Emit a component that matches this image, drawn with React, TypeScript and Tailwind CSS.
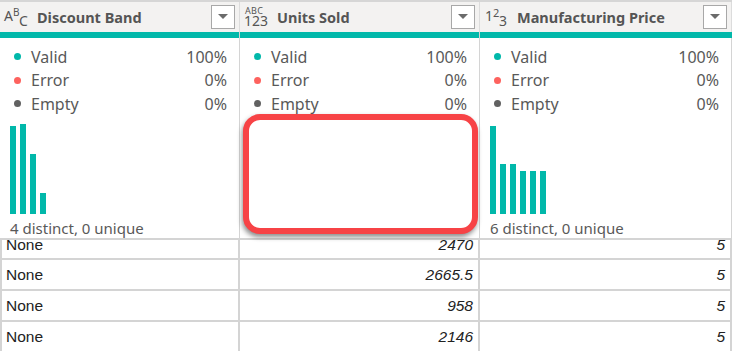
import React from "react";

const teal = "#01b8aa";

function TypeIcon({ kind }: { kind: "abc" | "any" | "num" }) {
  if (kind === "abc") {
    return (
      <div className="relative w-[32px] h-[22px] text-[#555] font-['Noto_Sans',sans-serif]">
        <span className="absolute left-[4px] top-[3px] text-[14px] leading-none">A</span>
        <span className="absolute left-[13px] top-[1px] text-[10px] leading-none">B</span>
        <span className="absolute left-[19px] top-[8px] text-[14px] leading-none">C</span>
      </div>
    );
  }
  if (kind === "any") {
    return (
      <div className="relative w-[32px] h-[22px] text-[#555] font-['Noto_Sans',sans-serif]">
        <span className="absolute left-[5px] top-[0px] text-[9px] leading-none tracking-[0.3px]">ABC</span>
        <span className="absolute left-[4px] top-[8px] text-[14px] leading-none">123</span>
      </div>
    );
  }
  return (
    <div className="relative w-[32px] h-[22px] text-[#555] font-['Noto_Sans',sans-serif]">
      <span className="absolute left-[5px] top-[3px] text-[14px] leading-none">1</span>
      <span className="absolute left-[13px] top-[1px] text-[11px] leading-none">2</span>
      <span className="absolute left-[19px] top-[8px] text-[14px] leading-none">3</span>
    </div>
  );
}

function Header({ title, kind }: { title: string; kind: "abc" | "any" | "num" }) {
  return (
    <div className="h-[30px] flex items-center bg-[#f3f2f1] border-r border-[#dcdcdc]">
      <TypeIcon kind={kind} />
      <div className="ml-[5px] flex-1 text-[14.5px] font-bold text-[#555] font-['Noto_Sans',sans-serif] leading-none">
        {title}
      </div>
      <div className="mr-[4px] w-[24px] h-[24px] bg-white border border-[#a8a8a8] flex items-center justify-center">
        <svg width="10" height="6" viewBox="0 0 10 6">
          <path d="M0 0 L10 0 L5 5 Z" fill="#6b6b6b" />
        </svg>
      </div>
    </div>
  );
}

function Stats() {
  const rows = [
    { c: teal, l: "Valid", v: "100%" },
    { c: "#fd625e", l: "Error", v: "0%" },
    { c: "#616161", l: "Empty", v: "0%" },
  ];
  return (
    <div className="pt-[7px] pl-[14px] pr-[12px]">
      {rows.map((r) => (
        <div key={r.l} className="h-[23.5px] flex items-center text-[16px] text-[#595959] font-['Noto_Sans',sans-serif]">
          <span className="w-[7px] h-[7px] rounded-full" style={{ backgroundColor: r.c }} />
          <span className="ml-[10px] flex-1">{r.l}</span>
          <span>{r.v}</span>
        </div>
      ))}
    </div>
  );
}

function Profile({ bars, caption }: { bars?: number[]; caption?: string }) {
  return (
    <div className="h-[200px] flex flex-col border-r border-[#d4d4d4] bg-white">
      <Stats />
      <div className="h-[98px] flex items-end gap-[4px] pl-[10px]">
        {bars?.map((h, i) => (
          <div key={i} className="w-[6px] bg-[#01b8aa]" style={{ height: h }} />
        ))}
      </div>
      <div className="pt-[4px] pl-[10px] leading-[20px] text-[15px] text-[#595959] font-['Noto_Sans',sans-serif]">
        {caption}
      </div>
    </div>
  );
}

function DataRow({ v2, v3, first }: { v2: string; v3: string; first?: boolean }) {
  const cell = "flex items-center h-[29px] text-[15.5px] text-[#222] font-['Liberation_Sans',Arial,sans-serif]";
  return (
    <div className={`grid grid-cols-[240px_240px_252px] border-t-2 border-[#d4d4d4] overflow-hidden ${first ? "h-[20px]" : "h-[31px]"}`}>
      <div className="border-l-2 border-r-2 border-[#d4d4d4] overflow-hidden">
        <div className={`${cell} pl-[4px] ${first ? "-mt-[10px]" : ""}`}>None</div>
      </div>
      <div className="border-r-2 border-[#d4d4d4] overflow-hidden">
        <div className={`${cell} justify-end pr-[5px] italic ${first ? "-mt-[10px]" : ""}`}>{v2}</div>
      </div>
      <div className="border-r-2 border-[#d4d4d4] overflow-hidden">
        <div className={`${cell} justify-end pr-[5px] italic ${first ? "-mt-[10px]" : ""}`}>{v3}</div>
      </div>
    </div>
  );
}

export default function App() {
  return (
    <div className="relative w-[732px] h-[352px] overflow-hidden bg-white">
      <div className="border-t-2 border-[#d6d6d6]">
        <div className="grid grid-cols-[240px_240px_252px]">
          <Header title="Discount Band" kind="abc" />
          <Header title="Units Sold" kind="any" />
          <Header title="Manufacturing Price" kind="num" />
        </div>
        <div className="grid grid-cols-[240px_240px_252px]">
          <div className="h-[6px] bg-[#01b8aa] border-r border-[#d4d4d4]" />
          <div className="h-[6px] bg-[#01b8aa] border-r border-[#d4d4d4]" />
          <div className="h-[6px] bg-[#01b8aa]" />
        </div>
        <div className="grid grid-cols-[240px_240px_252px]">
          <Profile bars={[88, 90, 60, 21]} caption="4 distinct, 0 unique" />
          <Profile />
          <Profile bars={[88, 50, 50, 43, 43, 43]} caption="6 distinct, 0 unique" />
        </div>
        <DataRow first v2="2470" v3="5" />
        <DataRow v2="2665.5" v3="5" />
        <DataRow v2="958" v3="5" />
        <DataRow v2="2146" v3="5" />
      </div>
      <div className="absolute left-[243px] top-[114px] w-[235px] h-[120px] rounded-[17px] border-[6px] border-[#f74346] bg-white shadow-[-1px_3px_5px_rgba(0,0,0,0.45)]" />
    </div>
  );
}
